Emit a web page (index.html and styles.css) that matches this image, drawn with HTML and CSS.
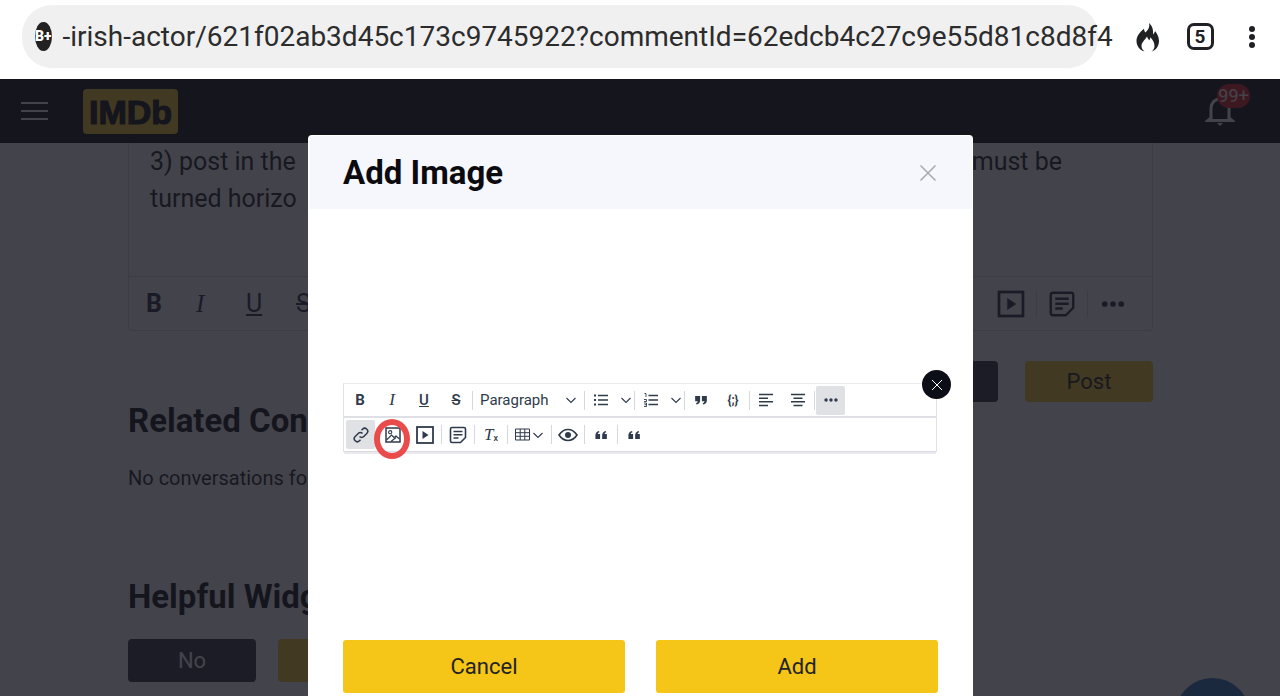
FILE: index.html
```html
<!DOCTYPE html>
<html lang="en">
<head>
  <meta charset="UTF-8">
  <title>Add Image</title>
  <link rel="stylesheet" href="styles.css">
</head>
<body>

  <svg class="defs" width="0" height="0">
    <symbol id="i-play" viewBox="0 0 20 20">
      <rect x="2" y="2" width="16" height="16" fill="none" stroke="currentColor" stroke-width="1.8"/>
      <path d="M7.5 6l6 4-6 4z" fill="currentColor"/>
    </symbol>
    <symbol id="i-note" viewBox="0 0 20 20">
      <path d="M4 2.5h12a1.5 1.5 0 0 1 1.500 1.500v8.500l-5 5H4A1.500 1.500 0 0 1 2.500 16V4A1.500 1.500 0 0 1 4 2.500z" fill="none" stroke="currentColor" stroke-width="1.600"/>
      <path d="M5.500 6.500h9M5.500 9.800h9M5.500 13h5" stroke="currentColor" stroke-width="1.600"/>
    </symbol>
    <symbol id="i-more" viewBox="0 0 20 20">
      <circle cx="4.500" cy="10" r="1.900" fill="currentColor"/>
      <circle cx="10" cy="10" r="1.900" fill="currentColor"/>
      <circle cx="15.500" cy="10" r="1.900" fill="currentColor"/>
    </symbol>
    <symbol id="i-chev" viewBox="0 0 12 12">
      <path d="M1.500 4l4.500 4.500L10.500 4" fill="none" stroke="currentColor" stroke-width="1.100"/>
    </symbol>
    <symbol id="i-quote-close" viewBox="0 0 20 20">
      <path d="M3.500 5.500h5.500v5c0 2.500-1.500 4-4 4.500l-.5-1.500c1.200-.3 1.800-1 1.900-2H3.500zM11 5.500h5.500v5c0 2.500-1.500 4-4 4.500l-.5-1.500c1.200-.3 1.800-1 1.900-2H11z" fill="currentColor"/>
    </symbol>
    <symbol id="i-quote-open" viewBox="0 0 20 20">
      <path d="M9 14.500H3.800v-4.300C3.800 7.600 5.300 6 7.800 5.500l.5 1.400c-1.200.4-1.800 1-1.900 2H9zM16.500 14.500h-5.200v-4.300c0-2.600 1.500-4.200 4-4.700l.5 1.400c-1.200.4-1.800 1-1.900 2h2.600z" fill="currentColor"/>
    </symbol>
  </svg>

  <div class="browser-bar">
    <div class="address">
      <span class="site-badge">B+</span>
      <span class="url">-irish-actor/621f02ab3d45c173c9745922?commentId=62edcb4c27c9e55d81c8d8f4</span>
    </div>
    <div class="browser-action">
      <svg width="26" height="30" viewBox="0 0 26 30"><path fill-rule="evenodd" d="M14 1c1 4.500-1 7-3.500 9.500C9.500 9.500 9 8.200 9 6.800 5 10 1.500 14 1.500 19c0 5.500 4 9.500 8 10.500-2-1.500-3-3.500-3-5.500 0-3.500 3-5.500 5.500-9.500 .5 2 1.500 2.800 2.500 3.800 .5-1 .8-2 .8-3 2.500 2.500 4.200 5.500 4.200 8.700 0 2.200-1 4.200-3 5.500 4-1 7.500-5 7.500-10.500 0-4-2-7.500-4-10-.3 1.500-1 2.700-2 3.500C18.500 8 17.500 4 14 1z" fill="#202124"/></svg>
    </div>
    <div class="browser-action"><span class="tab-count">5</span></div>
    <div class="browser-action kebab"><i></i><i></i><i></i></div>
  </div>

  <div class="page">
    <header class="site-header">
      <div class="burger"><i></i><i></i><i></i></div>
      <div class="logo">IMDb</div>
      <svg class="bell" width="30" height="32" viewBox="0 0 30 32"><path d="M6 23V13c0-5 4-9 9-9s9 4 9 9v10l3 2.500H3z" fill="none" stroke="#fff" stroke-width="3"/><path d="M12 28h6l-3 3z" fill="#fff"/></svg>
      <span class="badge">99+</span>
    </header>

    <main class="content">
      <section class="editor">
        <div class="editor-text">
          <p class="line"><span>3) post in the</span><span>must be</span></p>
          <p class="line"><span>turned horizo</span></p>
        </div>
        <div class="editor-tools">
          <div class="tools-left">
            <b class="glyph">B</b>
            <i class="glyph serif">I</i>
            <u class="glyph">U</u>
            <s class="glyph">S</s>
          </div>
          <div class="tools-right">
            <svg class="tool-icon" width="30" height="30"><use href="#i-play"/></svg>
            <span class="tool-sep"></span>
            <svg class="tool-icon" width="30" height="30"><use href="#i-note"/></svg>
            <span class="tool-sep"></span>
            <svg class="tool-icon" width="30" height="30"><use href="#i-more"/></svg>
          </div>
        </div>
      </section>

      <div class="form-actions">
        <button class="btn btn-dark">Preview</button>
        <button class="btn btn-yellow">Post</button>
      </div>

      <h2 class="related-title">Related Conversations</h2>
      <p class="related-empty">No conversations found</p>

      <h2 class="helpful-title">Helpful Widget</h2>
      <div class="helpful-actions">
        <button class="btn btn-dark">No</button>
        <button class="btn btn-yellow">Yes</button>
      </div>
    </main>

    <div class="chat-bubble"></div>
    <div class="backdrop"></div>

    <div class="modal">
      <div class="modal-head">
        <h1>Add Image</h1>
        <svg width="20" height="20" viewBox="0 0 20 20"><path d="M2.500 2.500l15 15M17.500 2.500l-15 15" stroke="#a9abb3" stroke-width="1.600"/></svg>
      </div>

      <div class="modal-body">
        <div class="shot">
          <div class="rows">
            <div class="row row-top">
              <span class="tb"><b>B</b></span>
              <span class="tb"><i class="serif">I</i></span>
              <span class="tb"><u>U</u></span>
              <span class="tb"><s>S</s></span>
              <span class="sep"></span>
              <span class="para">Paragraph<svg width="12" height="12"><use href="#i-chev"/></svg></span>
              <span class="sep"></span>
              <span class="tb">
                <svg width="16" height="16" viewBox="0 0 16 16"><path d="M5 3.500h10M5 8h10M5 12.500h10" stroke="currentColor" stroke-width="1.500"/><path d="M1 2.500h2v2H1zM1 7h2v2H1zM1 11.500h2v2H1z" fill="currentColor"/></svg>
              </span>
              <span class="chev"><svg width="12" height="12"><use href="#i-chev"/></svg></span>
              <span class="sep"></span>
              <span class="tb tb-num">
                <svg width="16" height="16" viewBox="0 0 16 16"><path d="M5.500 3.500H15M5.500 8H15M5.500 12.500H15" stroke="currentColor" stroke-width="1.500"/><path d="M1.500 1.500h1.500v3.500M1 9.500h2.500v-2H1M1 11h2.500v3.500H1M1.500 12.700h2" fill="none" stroke="currentColor" stroke-width=".9"/></svg>
              </span>
              <span class="chev"><svg width="12" height="12"><use href="#i-chev"/></svg></span>
              <span class="sep"></span>
              <span class="tb"><svg width="18" height="18"><use href="#i-quote-close"/></svg></span>
              <span class="tb code">{;}</span>
              <span class="sep"></span>
              <span class="tb">
                <svg width="16" height="16" viewBox="0 0 16 16"><path d="M1 2.500h14M1 6.200h9M1 9.800h14M1 13.500h9" stroke="currentColor" stroke-width="1.500"/></svg>
              </span>
              <span class="tb">
                <svg width="16" height="16" viewBox="0 0 16 16"><path d="M1 2.500h14M3.500 6.200h9M1 9.800h14M3.500 13.500h9" stroke="currentColor" stroke-width="1.500"/></svg>
              </span>
              <span class="sep"></span>
              <span class="tb tb-on"><svg width="18" height="18"><use href="#i-more"/></svg></span>
            </div>
            <div class="row row-bottom">
              <span class="tb tb-on">
                <svg width="18" height="18" viewBox="0 0 18 18"><path d="M7.500 10.500a3 3 0 0 0 4.300 0l3-3a3 3 0 0 0-4.300-4.300l-1 1M10.500 7.500a3 3 0 0 0-4.300 0l-3 3a3 3 0 0 0 4.300 4.300l1-1" fill="none" stroke="currentColor" stroke-width="1.500"/></svg>
              </span>
              <span class="tb">
                <svg width="18" height="18" viewBox="0 0 18 18"><rect x="2" y="2" width="14" height="14" fill="none" stroke="currentColor" stroke-width="1.500"/><circle cx="6.200" cy="6.200" r="1.600" fill="none" stroke="currentColor" stroke-width="1.100"/><path d="M2.500 14l5-5 2.500 2.500 2-1.500 3.500 3" fill="none" stroke="currentColor" stroke-width="1.200"/><path d="M7 15.500l5-4" stroke="currentColor" stroke-width="1.200"/></svg>
              </span>
              <span class="tb"><svg width="20" height="20"><use href="#i-play"/></svg></span>
              <span class="sep"></span>
              <span class="tb"><svg width="20" height="20"><use href="#i-note"/></svg></span>
              <span class="sep"></span>
              <span class="tb"><i class="serif">T</i><small class="sub-x">x</small></span>
              <span class="sep"></span>
              <span class="tb-table">
                <svg width="15" height="13" viewBox="0 0 15 13"><path d="M.5 1h14v11H.5zM.5 4.700h14M.5 8.300h14M5.200 1v11M9.800 1v11" fill="none" stroke="currentColor"/></svg>
                <svg width="12" height="12"><use href="#i-chev"/></svg>
              </span>
              <span class="sep"></span>
              <span class="tb">
                <svg width="20" height="20" viewBox="0 0 20 20"><path d="M1 10c2.500-3.700 5.500-5.500 9-5.500s6.500 1.800 9 5.500c-2.500 3.700-5.500 5.500-9 5.500S3.500 13.700 1 10z" fill="none" stroke="currentColor" stroke-width="1.700"/><circle cx="10" cy="10" r="3" fill="currentColor"/></svg>
              </span>
              <span class="sep"></span>
              <span class="tb"><svg width="18" height="18"><use href="#i-quote-open"/></svg></span>
              <span class="sep"></span>
              <span class="tb"><svg width="18" height="18"><use href="#i-quote-open"/></svg></span>
            </div>
            <span class="red-ring"></span>
            <span class="shot-close">
              <svg width="12" height="12" viewBox="0 0 12 12"><path d="M1 1l10 10M11 1L1 11" stroke="#fff" stroke-width="1"/></svg>
            </span>
          </div>
        </div>
        <div class="modal-actions">
          <button class="modal-btn">Cancel</button>
          <button class="modal-btn">Add</button>
        </div>
      </div>
    </div>
  </div>

</body>
</html>
```

FILE: styles.css
```css
* {
  box-sizing: border-box;
}

html, body {
  margin: 0;
  padding: 0;
  height: 696px;
  overflow: hidden;
}

body {
  font-family: Roboto, sans-serif;
  background: #fff;
  color: #121212;
}

.defs {
  position: absolute;
}

.serif {
  font-family: "Liberation Serif", serif;
}

/* browser chrome */
.browser-bar {
  height: 79px;
  display: flex;
  align-items: flex-start;
  padding: 5px 0 0 22px;
  background: #fff;
}

.address {
  width: 1076px;
  height: 63px;
  display: flex;
  align-items: center;
  gap: 11px;
  padding-left: 13px;
  border-radius: 30px;
  background: #f0f0f0;
  margin-right: 24px;
}

.site-badge {
  width: 29px;
  height: 29px;
  border-radius: 50%;
  background: #222;
  color: #fff;
  font-size: 14px;
  font-weight: 900;
  line-height: 29px;
  text-align: center;
}

.url {
  font-size: 28px;
  color: #2c2c2c;
  white-space: nowrap;
}

.browser-action {
  width: 52px;
  height: 63px;
  display: flex;
  align-items: center;
  justify-content: center;
}

.tab-count {
  width: 27px;
  height: 27px;
  border: 3px solid #202124;
  border-radius: 7px;
  font-size: 19px;
  font-weight: 700;
  line-height: 21px;
  text-align: center;
  color: #202124;
}

.kebab {
  flex-direction: column;
  gap: 2px;
}

.kebab i {
  width: 6px;
  height: 6px;
  border-radius: 50%;
  background: #202124;
}

/* page under the dialog */
.page {
  position: relative;
  height: 617px;
  overflow: hidden;
  background: #fff;
}

.site-header {
  height: 64px;
  display: flex;
  align-items: center;
  position: relative;
  padding-left: 21px;
  background: #000;
}

.burger {
  width: 27px;
  display: flex;
  flex-direction: column;
  gap: 6px;
}

.burger i {
  height: 2px;
  background: #fff;
}

.logo {
  margin-left: 35px;
  width: 95px;
  height: 45px;
  border-radius: 4px;
  background: #f5c518;
  color: #000;
  font-family: "Liberation Sans", sans-serif;
  font-size: 34px;
  font-weight: 700;
  line-height: 46px;
  text-align: center;
  -webkit-text-stroke: 1.200px #000;
}

.bell {
  margin-left: auto;
  margin-right: 45px;
}

.badge {
  position: absolute;
  left: 1217px;
  top: 5px;
  width: 33px;
  height: 24px;
  border-radius: 12px;
  background: #e2151b;
  color: #fff;
  font-size: 18px;
  line-height: 24px;
  text-align: center;
}

.content {
  padding: 0 127px 0 128px;
}

.editor {
  border: 1px solid #d9d9de;
  border-top: none;
  border-radius: 0 0 4px 4px;
  height: 188px;
}

.editor-text {
  height: 134px;
  padding-top: -1px;
  border-bottom: 1px solid #d9d9de;
}

.line {
  margin: 0;
  display: flex;
  justify-content: space-between;
  padding: 0 90px 0 21px;
  font-size: 25px;
  line-height: 37px;
  color: #121212;
}

.editor-tools {
  height: 53px;
  display: flex;
  justify-content: space-between;
  align-items: center;
  padding: 0 24px 0 14px;
  color: #1c2536;
}

.tools-left {
  display: flex;
}

.glyph {
  width: 50px;
  font-size: 25px;
  line-height: 30px;
  text-align: left;
  padding-left: 3px;
}

.tools-right {
  display: flex;
  align-items: center;
  gap: 10px;
}

.tool-icon {
  display: block;
}

.tool-sep {
  width: 1px;
  height: 26px;
  background: #d9d9de;
}

.form-actions {
  display: flex;
  justify-content: flex-end;
  gap: 27px;
  margin-top: 30px;
}

.btn {
  width: 128px;
  height: 41px;
  padding: 0;
  border: none;
  border-radius: 4px;
  font-family: Roboto, sans-serif;
  font-size: 22px;
}

.btn-dark {
  background: #262730;
  color: #fff;
}

.btn-yellow {
  background: #f5c518;
  color: #121212;
}

.related-title,
.helpful-title {
  margin: 0;
  font-size: 33px;
  font-weight: 700;
  line-height: 40px;
  color: #000;
  white-space: nowrap;
}

.related-title {
  margin-top: -1px;
}

.related-empty {
  margin: 25px 0 0;
  font-size: 20px;
  line-height: 24px;
  color: #121212;
}

.helpful-title {
  margin-top: 87px;
}

.helpful-actions {
  display: flex;
  gap: 22px;
  margin-top: 22px;
}

.helpful-actions .btn {
  height: 43px;
}

.chat-bubble {
  position: absolute;
  left: 1175px;
  top: 599px;
  width: 75px;
  height: 75px;
  border-radius: 50%;
  background: #1d6fb8;
}

.backdrop {
  position: absolute;
  inset: 0;
  background: rgba(26, 26, 35, 0.82);
}

/* dialog */
.modal {
  position: absolute;
  left: 308px;
  top: 56px;
  width: 665px;
  height: 640px;
  padding: 1px 1px 0 2px;
  border-radius: 4px;
  background: #fff;
}

.modal-head {
  height: 73px;
  display: flex;
  align-items: center;
  justify-content: space-between;
  padding: 0 34px 0 33px;
  background: #f6f7fd;
}

.modal-head h1 {
  margin: 0;
  font-size: 33px;
  font-weight: 700;
  color: #0b0b0f;
}

.modal-head svg {
  display: block;
}

.modal-body {
  padding: 0 33px;
}

.shot {
  height: 431px;
  padding-top: 174px;
}

.rows {
  position: relative;
  width: 594px;
  color: #2f3a4c;
  border-top: 1px solid #ececef;
  border-left: 1px solid #e2e2e8;
  border-right: 1px solid #e2e2e8;
}

.row {
  display: flex;
  align-items: center;
}

.row-top {
  height: 33px;
  border-bottom: 1px solid #dfe0e6;
}

.row-bottom {
  height: 35px;
  border-top: 1px solid #dfe0e6;
  border-bottom: 1px solid #d9dae2;
  margin-bottom: 2px;
  box-shadow: 0 2px 0 #e9e9ee;
}

.tb {
  width: 32px;
  height: 29px;
  display: flex;
  align-items: center;
  justify-content: center;
  border-radius: 2px;
  font-size: 15px;
  font-weight: 500;
  flex: none;
}

.tb .serif {
  font-size: 17px;
}

.tb-on {
  width: 29px;
  background: #dfe1e4;
}

.row-top .tb-on {
  margin-left: 1px;
}

.row-bottom .tb-on {
  margin-left: 2px;
  margin-right: 2px;
}

.row-top .tb:first-child {
  margin-left: 0;
}

.sep {
  width: 1px;
  height: 19px;
  background: #d6d8dd;
  flex: none;
}

.para {
  width: 111px;
  display: flex;
  align-items: center;
  justify-content: space-between;
  padding: 0 7px;
  font-size: 15px;
  flex: none;
}

.chev {
  width: 17px;
  display: flex;
  justify-content: center;
  flex: none;
}

.tb-num {
  margin-left: 0;
}

.code {
  font-size: 12px;
  font-weight: 700;
}

.sub-x {
  font-size: 9px;
  align-self: flex-end;
  margin-bottom: 6px;
}

.tb-table {
  width: 43px;
  display: flex;
  align-items: center;
  justify-content: center;
  gap: 2px;
  flex: none;
}

.red-ring {
  position: absolute;
  left: 30px;
  top: 35px;
  width: 36px;
  height: 40px;
  border: 6px solid #ea4b4b;
  border-radius: 50%;
}

.shot-close {
  position: absolute;
  left: 578px;
  top: -14px;
  width: 29px;
  height: 29px;
  display: flex;
  align-items: center;
  justify-content: center;
  border-radius: 50%;
  background: #0b0d17;
}

.modal-actions {
  display: flex;
  gap: 31px;
}

.modal-btn {
  width: 282px;
  height: 53px;
  padding: 0;
  border: none;
  border-radius: 3px;
  background: #f5c518;
  color: #222;
  font-family: Roboto, sans-serif;
  font-size: 22px;
}
```
